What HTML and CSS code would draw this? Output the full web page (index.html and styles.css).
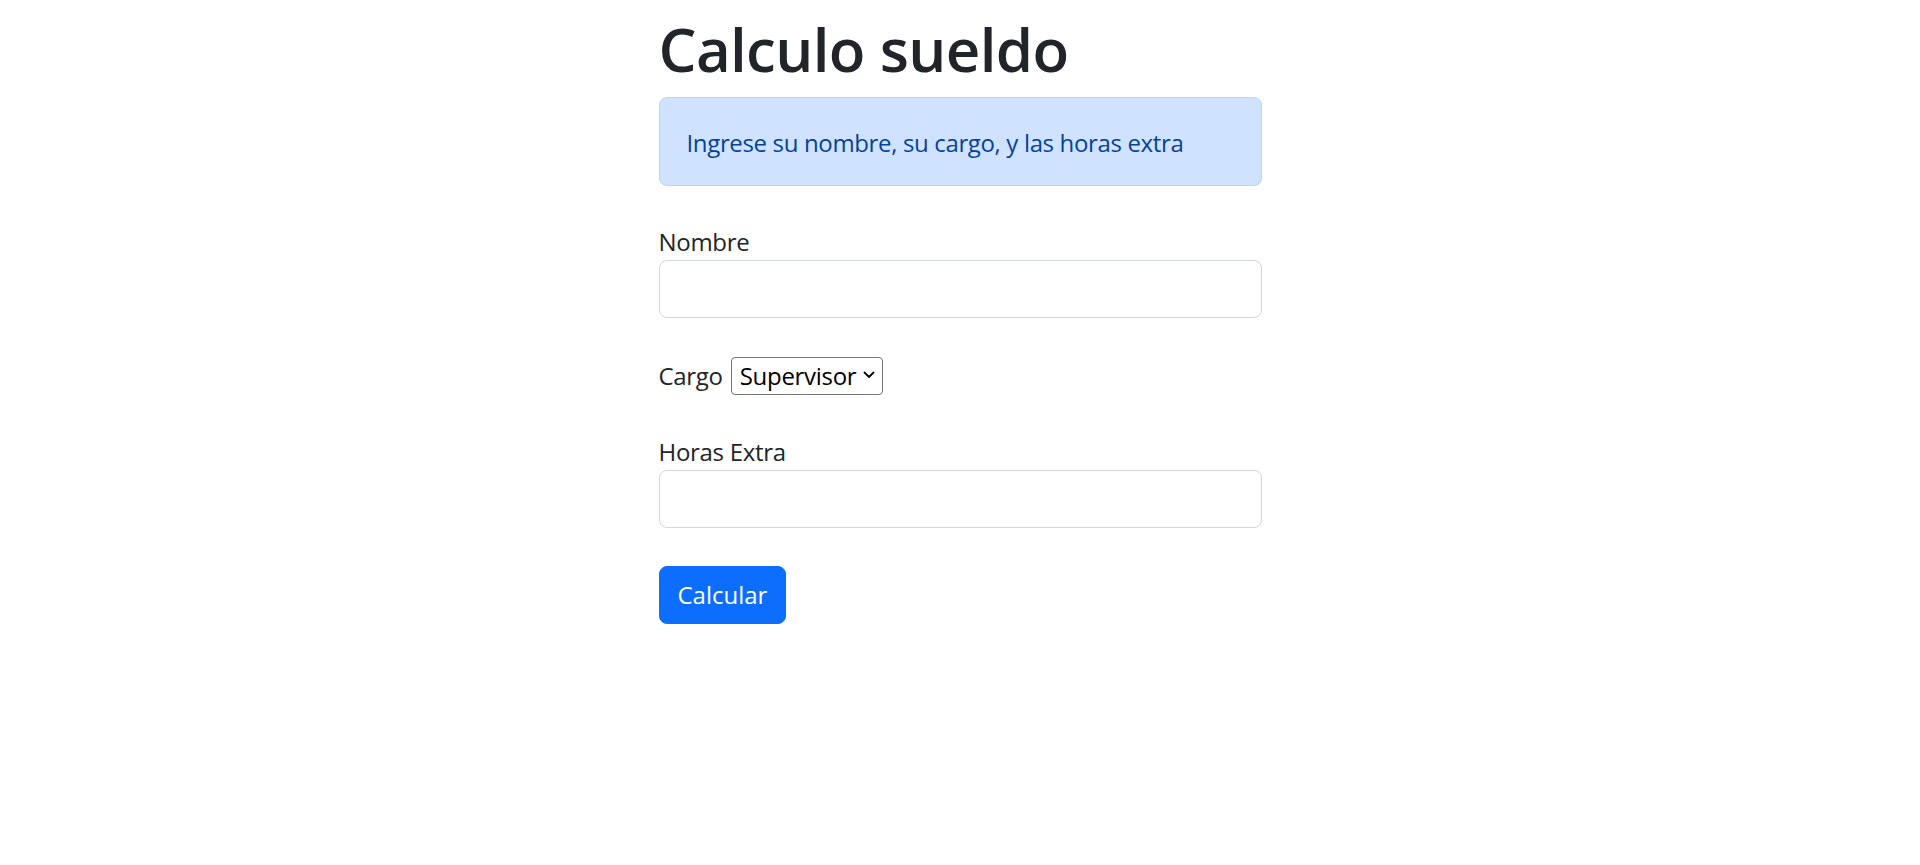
FILE: index.html
```html
<!DOCTYPE html>
<html lang="es">
<head>
<meta charset="utf-8">
<title>Calculo sueldo</title>
<link rel="stylesheet" href="styles.css">
</head>
<body>
<main class="wrap">
  <h1 class="title">Calculo sueldo</h1>
  <div class="alert">Ingrese su nombre, su cargo, y las horas extra</div>
  <form class="form">
    <div class="field field-nombre">
      <label class="label" for="nombre">Nombre</label>
      <input class="input" type="text" id="nombre">
    </div>
    <div class="field field-cargo">
      <label class="label-inline" for="cargo">Cargo</label>
      <span class="select-wrap">
        <select class="select" id="cargo">
          <option>Supervisor</option>
          <option>Operario</option>
          <option>Gerente</option>
        </select>
        <svg class="chevron" width="12" height="8" viewBox="0 0 12 8" aria-hidden="true">
          <path d="M1.5 1.5 L6 6 L10.5 1.5" fill="none" stroke="#000" stroke-width="1.8" stroke-linecap="round" stroke-linejoin="round"/>
        </svg>
      </span>
    </div>
    <div class="field field-horas">
      <label class="label" for="horas">Horas Extra</label>
      <input class="input" type="text" id="horas">
    </div>
    <button class="btn" type="button">Calcular</button>
  </form>
</main>
</body>
</html>
```

FILE: styles.css
```css
* { box-sizing: border-box; }

html, body {
  margin: 0;
  padding: 0;
  background: #fff;
}

body {
  font-family: "Open Sans", "Noto Sans", "Liberation Sans", sans-serif;
  font-size: 24px;
  line-height: 36px;
  color: #212529;
}

.wrap {
  width: 603px;
  margin: 0 auto;
  padding-top: 13px;
}

.title {
  margin: 0 0 12px;
  font-size: 60px;
  line-height: 72px;
  font-weight: 600;
  letter-spacing: -0.65px;
  color: #212529;
}

.alert {
  background: #cfe2ff;
  border: 1px solid #b6d4fe;
  border-radius: 8px;
  color: #084298;
  padding: 27px 27px 24px;
  line-height: 36px;
  letter-spacing: -0.35px;
}

.form {
  display: flex;
  flex-direction: column;
  align-items: flex-start;
  margin-top: 38px;
}

.field {
  width: 100%;
}

.label {
  display: block;
  line-height: 36px;
  letter-spacing: -0.3px;
}

.input {
  display: block;
  width: 100%;
  height: 58px;
  margin: 0;
  padding: 0 18px;
  font: inherit;
  color: #212529;
  background: #fff;
  border: 1px solid #d3d6da;
  border-radius: 8px;
}

.field-cargo {
  display: flex;
  align-items: center;
  gap: 8px;
  margin-top: 39px;
  height: 38px;
}

.label-inline {
  line-height: 36px;
  letter-spacing: -0.3px;
}

.select-wrap {
  position: relative;
  display: inline-flex;
}

.select {
  -webkit-appearance: none;
  appearance: none;
  width: 152px;
  height: 38px;
  margin: 0;
  font-family: inherit;
  font-size: 24px;
  line-height: 36px;
  letter-spacing: -0.3px;
  color: #000;
  background: #fff;
  border: 1px solid #767676;
  border-radius: 4px;
  padding: 0 24px 0 8px;
}

.chevron {
  position: absolute;
  right: 8px;
  top: 14px;
  pointer-events: none;
}

.field-horas {
  margin-top: 39px;
}

.btn {
  margin-top: 38px;
  height: 58px;
  padding: 0 18px;
  font: inherit;
  color: #fff;
  background: #0d6efd;
  border: 1px solid #0d6efd;
  border-radius: 8px;
  cursor: pointer;
}
```
